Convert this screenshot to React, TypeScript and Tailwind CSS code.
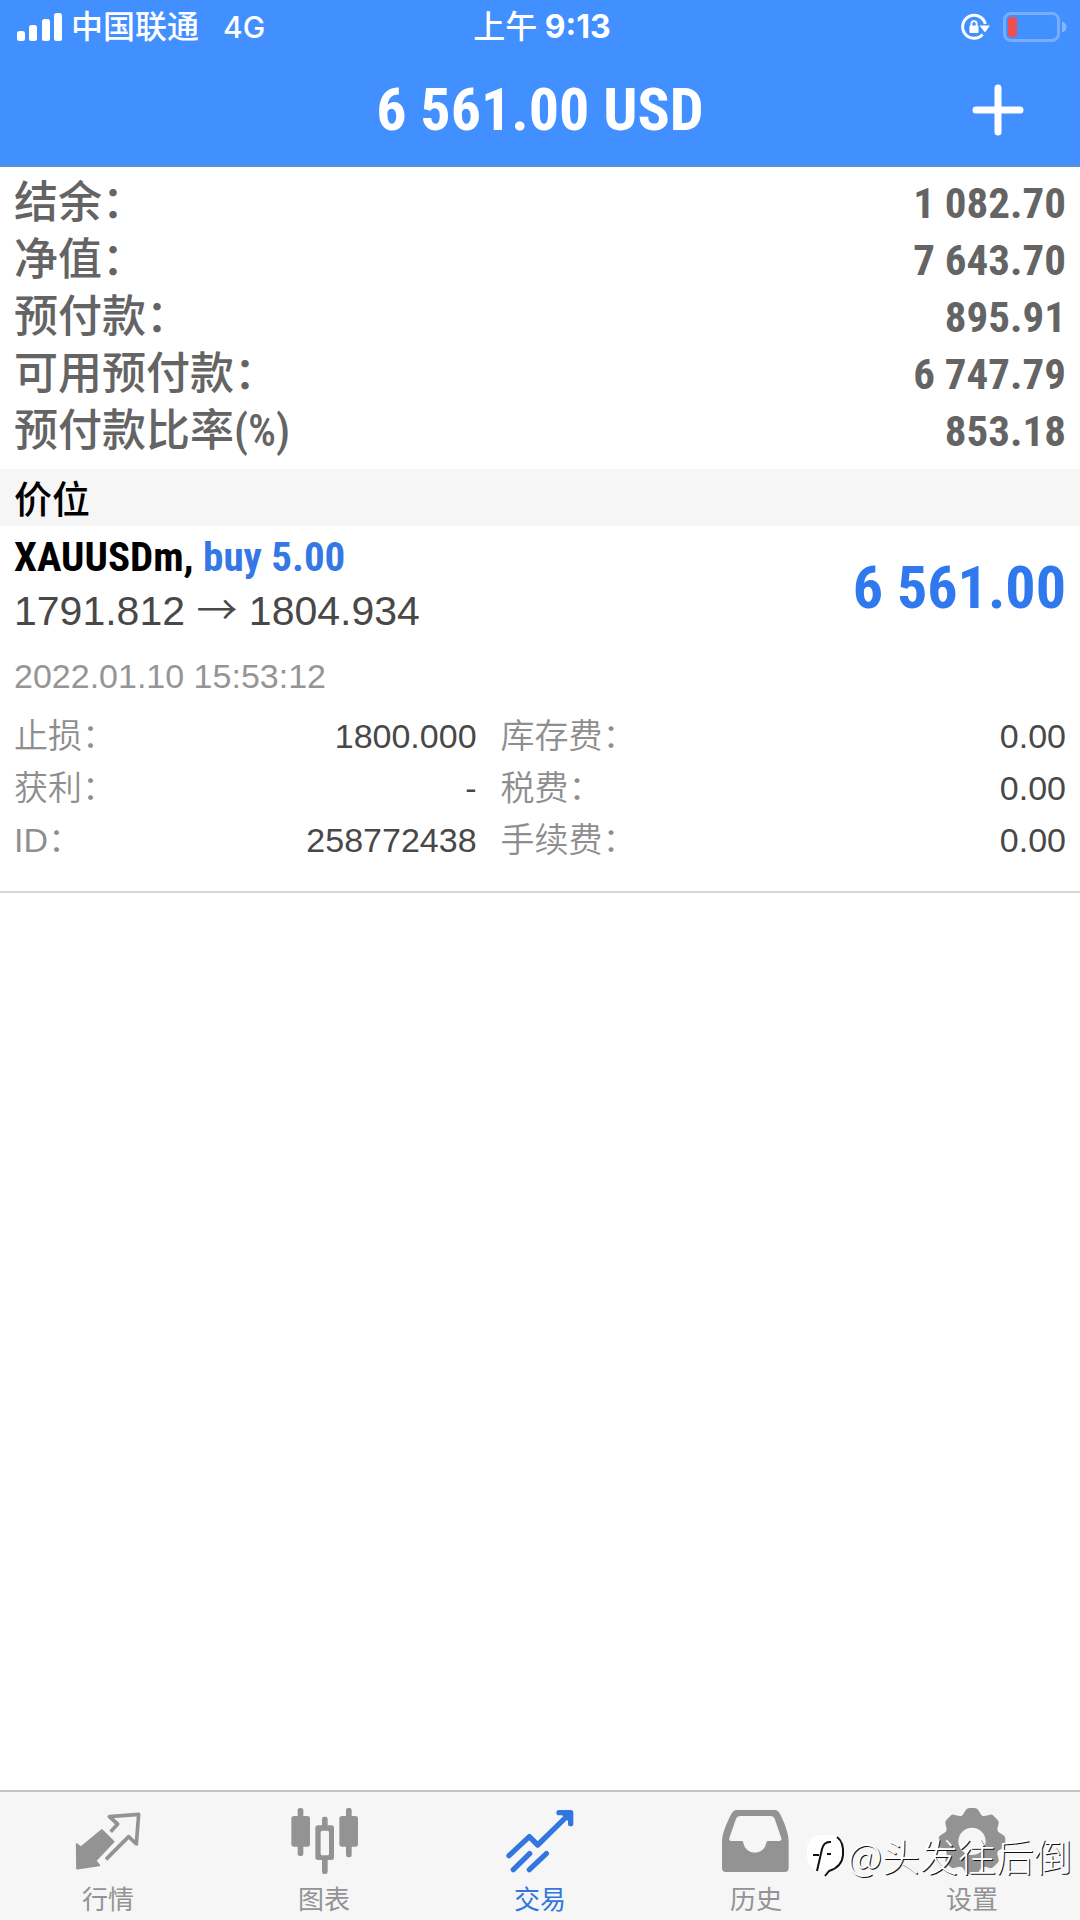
import React from "react";

const account = [
  { label: "结余：", value: "1 082.70" },
  { label: "净值：", value: "7 643.70" },
  { label: "预付款：", value: "895.91" },
  { label: "可用预付款：", value: "6 747.79" },
  { label: "预付款比率(%)", value: "853.18" },
];

const leftDetails = [
  { label: "止损：", value: "1800.000" },
  { label: "获利：", value: "-" },
  { label: "ID：", value: "258772438" },
];

const rightDetails = [
  { label: "库存费：", value: "0.00" },
  { label: "税费：", value: "0.00" },
  { label: "手续费：", value: "0.00" },
];

function SignalIcon() {
  return (
    <svg className="w-[46px] h-[30px]" viewBox="0 0 46 30" fill="currentColor">
      <rect x="0" y="19" width="8" height="10" rx="2.5" />
      <rect x="12" y="13" width="8" height="16" rx="2.5" />
      <rect x="25" y="7" width="8" height="22" rx="2.5" />
      <rect x="37" y="1" width="8" height="28" rx="2.5" />
    </svg>
  );
}

function RotationLockIcon() {
  return (
    <svg className="w-8 h-8" viewBox="0 0 32 32" fill="none">
      <path
        d="M23.6 23.6A11.5 11.5 0 1 1 26.3 13"
        stroke="currentColor"
        strokeWidth="3"
      />
      <path d="M20.5 14.5H31L26 21.5Z" fill="currentColor" />
      <rect x="10.5" y="14.5" width="9" height="7.5" rx="1" fill="currentColor" />
      <path
        d="M12.4 15v-2.2a2.6 2.6 0 0 1 5.2 0V15"
        stroke="currentColor"
        strokeWidth="1.8"
      />
    </svg>
  );
}

function BatteryIcon() {
  return (
    <svg className="w-16 h-[30px]" viewBox="0 0 64 30" fill="none">
      <rect
        x="1.5"
        y="1.5"
        width="54"
        height="27"
        rx="6.5"
        stroke="#78adff"
        strokeWidth="3"
      />
      <rect x="5" y="5" width="9" height="20" rx="3" fill="#f04f52" />
      <path d="M59 9.5Q63.5 11 63.5 15T59 20.5Z" fill="#86b6ff" />
    </svg>
  );
}

function QuotesIcon() {
  return (
    <svg className="w-[68px] h-[68px]" viewBox="0 0 204 204" fill="none">
      <path
        d="M8 114L20 124L84 72L119 107L65 164L76 178L9 188Z"
        fill="currentColor"
        stroke="currentColor"
        strokeWidth="5"
        strokeLinejoin="round"
      />
      <path
        d="M110 77L131 54L106 32L194 25L187 114L164 92L96 160"
        stroke="currentColor"
        strokeWidth="11"
        strokeLinejoin="round"
      />
    </svg>
  );
}

function ChartIcon() {
  return (
    <svg className="w-[68px] h-[68px]" viewBox="0 0 204 204" fill="currentColor">
      <rect x="23" y="6" width="17" height="144" rx="7" />
      <rect x="4" y="30" width="56" height="92" rx="8" />
      <rect x="96" y="32" width="17" height="172" rx="7" />
      <rect x="76" y="58" width="56" height="104" rx="8" />
      <rect x="92" y="74" width="25" height="74" rx="5" fill="#f6f6f6" />
      <rect x="168" y="6" width="17" height="148" rx="7" />
      <rect x="148" y="30" width="56" height="92" rx="8" />
    </svg>
  );
}

function TradeIcon() {
  return (
    <svg
      className="w-[68px] h-[68px]"
      viewBox="0 0 204 204"
      fill="none"
      stroke="currentColor"
      strokeWidth="16"
      strokeLinecap="round"
      strokeLinejoin="round"
    >
      <path d="M9 149L70 92L95 117L188 26" />
      <path d="M159 20H194V53" />
      <path d="M165 20L194 49V20Z" fill="currentColor" strokeWidth="6" />
      <path d="M22 191L71 143M70 191L121 143" />
    </svg>
  );
}

function HistoryIcon() {
  return (
    <svg className="w-[68px] h-[68px]" viewBox="0 0 204 204" fill="currentColor">
      <path
        fillRule="evenodd"
        d="M44 12H158Q168 12 174 24C188 50 200 84 200 107V186Q200 198 188 198H12Q0 198 0 186V107C0 84 14 50 28 24Q34 12 44 12ZM54 30Q45 30 42 38L22 96Q20 105 28 105H60Q64 105 64 111A35 35 0 0 0 133 111Q133 105 138 105H172Q180 105 178 97L158 38Q155 30 147 30Z"
      />
    </svg>
  );
}

function SettingsIcon() {
  return (
    <svg className="w-[68px] h-[68px]" viewBox="0 0 204 204" fill="currentColor">
      {[0, 45, 90, 135, 180, 225, 270, 315].map((angle) => (
        <path
          key={angle}
          transform={`rotate(${angle} 102 106)`}
          d="M64 34Q76 28 82 14Q85 6 94 6H110Q119 6 122 14Q128 28 140 34L102 70Z"
        />
      ))}
      <circle cx="102" cy="106" r="80" />
      <circle cx="102" cy="106" r="41" fill="#f6f6f6" />
    </svg>
  );
}

const tabs = [
  { name: "行情", icon: <QuotesIcon />, active: false },
  { name: "图表", icon: <ChartIcon />, active: false },
  { name: "交易", icon: <TradeIcon />, active: true },
  { name: "历史", icon: <HistoryIcon />, active: false },
  { name: "设置", icon: <SettingsIcon />, active: false },
];

function Header() {
  return (
    <header className="bg-[#428fff] text-white border-b-2 border-[#5b8fcf]">
      <div className="grid grid-cols-3 items-center h-[54px] pl-[17px] pr-[13px] text-[32px] font-['Inter','Noto_Sans_CJK_SC',sans-serif]">
        <div className="flex items-center gap-2">
          <SignalIcon />
          <span className="font-medium whitespace-nowrap">中国联通</span>
          <span className="pl-4 font-medium text-[30px]">4G</span>
        </div>
        <div className="text-center font-bold whitespace-nowrap">
          <span className="font-medium">上午</span> 9:13
        </div>
        <div className="flex items-center justify-end gap-3">
          <RotationLockIcon />
          <BatteryIcon />
        </div>
      </div>
      <div className="grid grid-cols-[1fr_auto_1fr] items-center h-[111px] px-14">
        <h1 className="col-start-2 text-[60px] leading-[72px] font-bold font-['Roboto_Condensed','Roboto',sans-serif]">
          6 561.00 USD
        </h1>
        <button aria-label="新订单" className="justify-self-end">
          <svg
            className="w-[52px] h-[52px]"
            viewBox="0 0 52 52"
            stroke="currentColor"
            strokeWidth="7"
            strokeLinecap="round"
          >
            <path d="M26 4V48M4 26H48" />
          </svg>
        </button>
      </div>
    </header>
  );
}

function DetailList({ items }: { items: { label: string; value: string }[] }) {
  return (
    <dl className="text-[34px] leading-[52px]">
      {items.map((item) => (
        <div key={item.label} className="flex justify-between h-[52px]">
          <dt className="text-[#8e8e8e] font-[350]">{item.label}</dt>
          <dd className="text-[#484848]">{item.value}</dd>
        </div>
      ))}
    </dl>
  );
}

function Position() {
  return (
    <section className="px-[14px] pt-1 pb-[25px] border-b-2 border-[#d6d6d6]">
      <div className="flex items-center justify-between">
        <div>
          <h3 className="text-[41px] leading-[54px] font-bold text-black font-['Roboto_Condensed','Roboto',sans-serif]">
            XAUUSDm, <span className="text-[#3578e5]">buy 5.00</span>
          </h3>
          <p className="text-[41px] leading-[54px] text-[#484848]">
            1791.812{" "}
            <span className="leading-none font-[350] font-['Noto_Sans_CJK_SC',sans-serif]">→</span>{" "}
            1804.934
          </p>
        </div>
        <p className="pt-2 text-[60px] leading-[72px] font-bold text-[#2f78ee] font-['Roboto_Condensed','Roboto',sans-serif]">
          6 561.00
        </p>
      </div>
      <p className="mt-3 mb-2 text-[34px] leading-[52px] text-[#959595]">
        2022.01.10 15:53:12
      </p>
      <div className="grid grid-cols-[463fr_566fr] gap-6">
        <DetailList items={leftDetails} />
        <DetailList items={rightDetails} />
      </div>
    </section>
  );
}

function TabBar() {
  return (
    <nav className="relative grid grid-cols-5 h-[130px] pt-[14px] bg-[#f6f6f6] border-t-2 border-[#c4c6c4]">
      {tabs.map((tab) => (
        <button
          key={tab.name}
          className={
            tab.active
              ? "flex flex-col items-center gap-2 text-[#3476e0]"
              : "flex flex-col items-center gap-2 text-[#939393]"
          }
        >
          {tab.icon}
          <span className="text-[26px] leading-9">{tab.name}</span>
        </button>
      ))}
      <Watermark />
    </nav>
  );
}

function Watermark() {
  return (
    <div className="absolute right-2 top-10 flex items-center text-white pointer-events-none">
      <svg className="w-[42px] h-[46px]" viewBox="0 0 42 46" fill="none">
        <rect x="2" y="3" width="37" height="36" rx="14" fill="#fff" />
        <path
          d="M32 5Q39 10 38 23Q37 35 24 39L20 44"
          stroke="#111"
          strokeWidth="2"
        />
        <path
          d="M26 10Q19 9 17 17L12 39M8 23H14M22 22H26"
          stroke="#111"
          strokeWidth="2"
        />
      </svg>
      <span className="text-[38px] leading-[46px] font-light font-['Noto_Sans_CJK_SC',sans-serif] [text-shadow:1px_1px_0_#111]">
        @头发往后倒
      </span>
    </div>
  );
}

export default function App() {
  return (
    <div className="flex flex-col min-h-screen bg-white font-['Liberation_Sans','Noto_Sans_CJK_SC',sans-serif]">
      <Header />
      <main className="flex-1">
        <dl className="px-[14px] pt-2 pb-[9px] text-[#646464] font-['Roboto_Condensed','Noto_Sans_CJK_SC',sans-serif]">
          {account.map((row) => (
            <div key={row.label} className="flex items-center justify-between h-[57px]">
              <dt className="text-[44px] leading-[57px] font-medium">{row.label}</dt>
              <dd className="text-[43px] leading-[57px] font-bold">{row.value}</dd>
            </div>
          ))}
        </dl>
        <h2 className="h-[57px] px-[14px] bg-[#f6f6f6] text-[38px] leading-[62px] font-medium text-black">
          价位
        </h2>
        <Position />
      </main>
      <TabBar />
    </div>
  );
}
